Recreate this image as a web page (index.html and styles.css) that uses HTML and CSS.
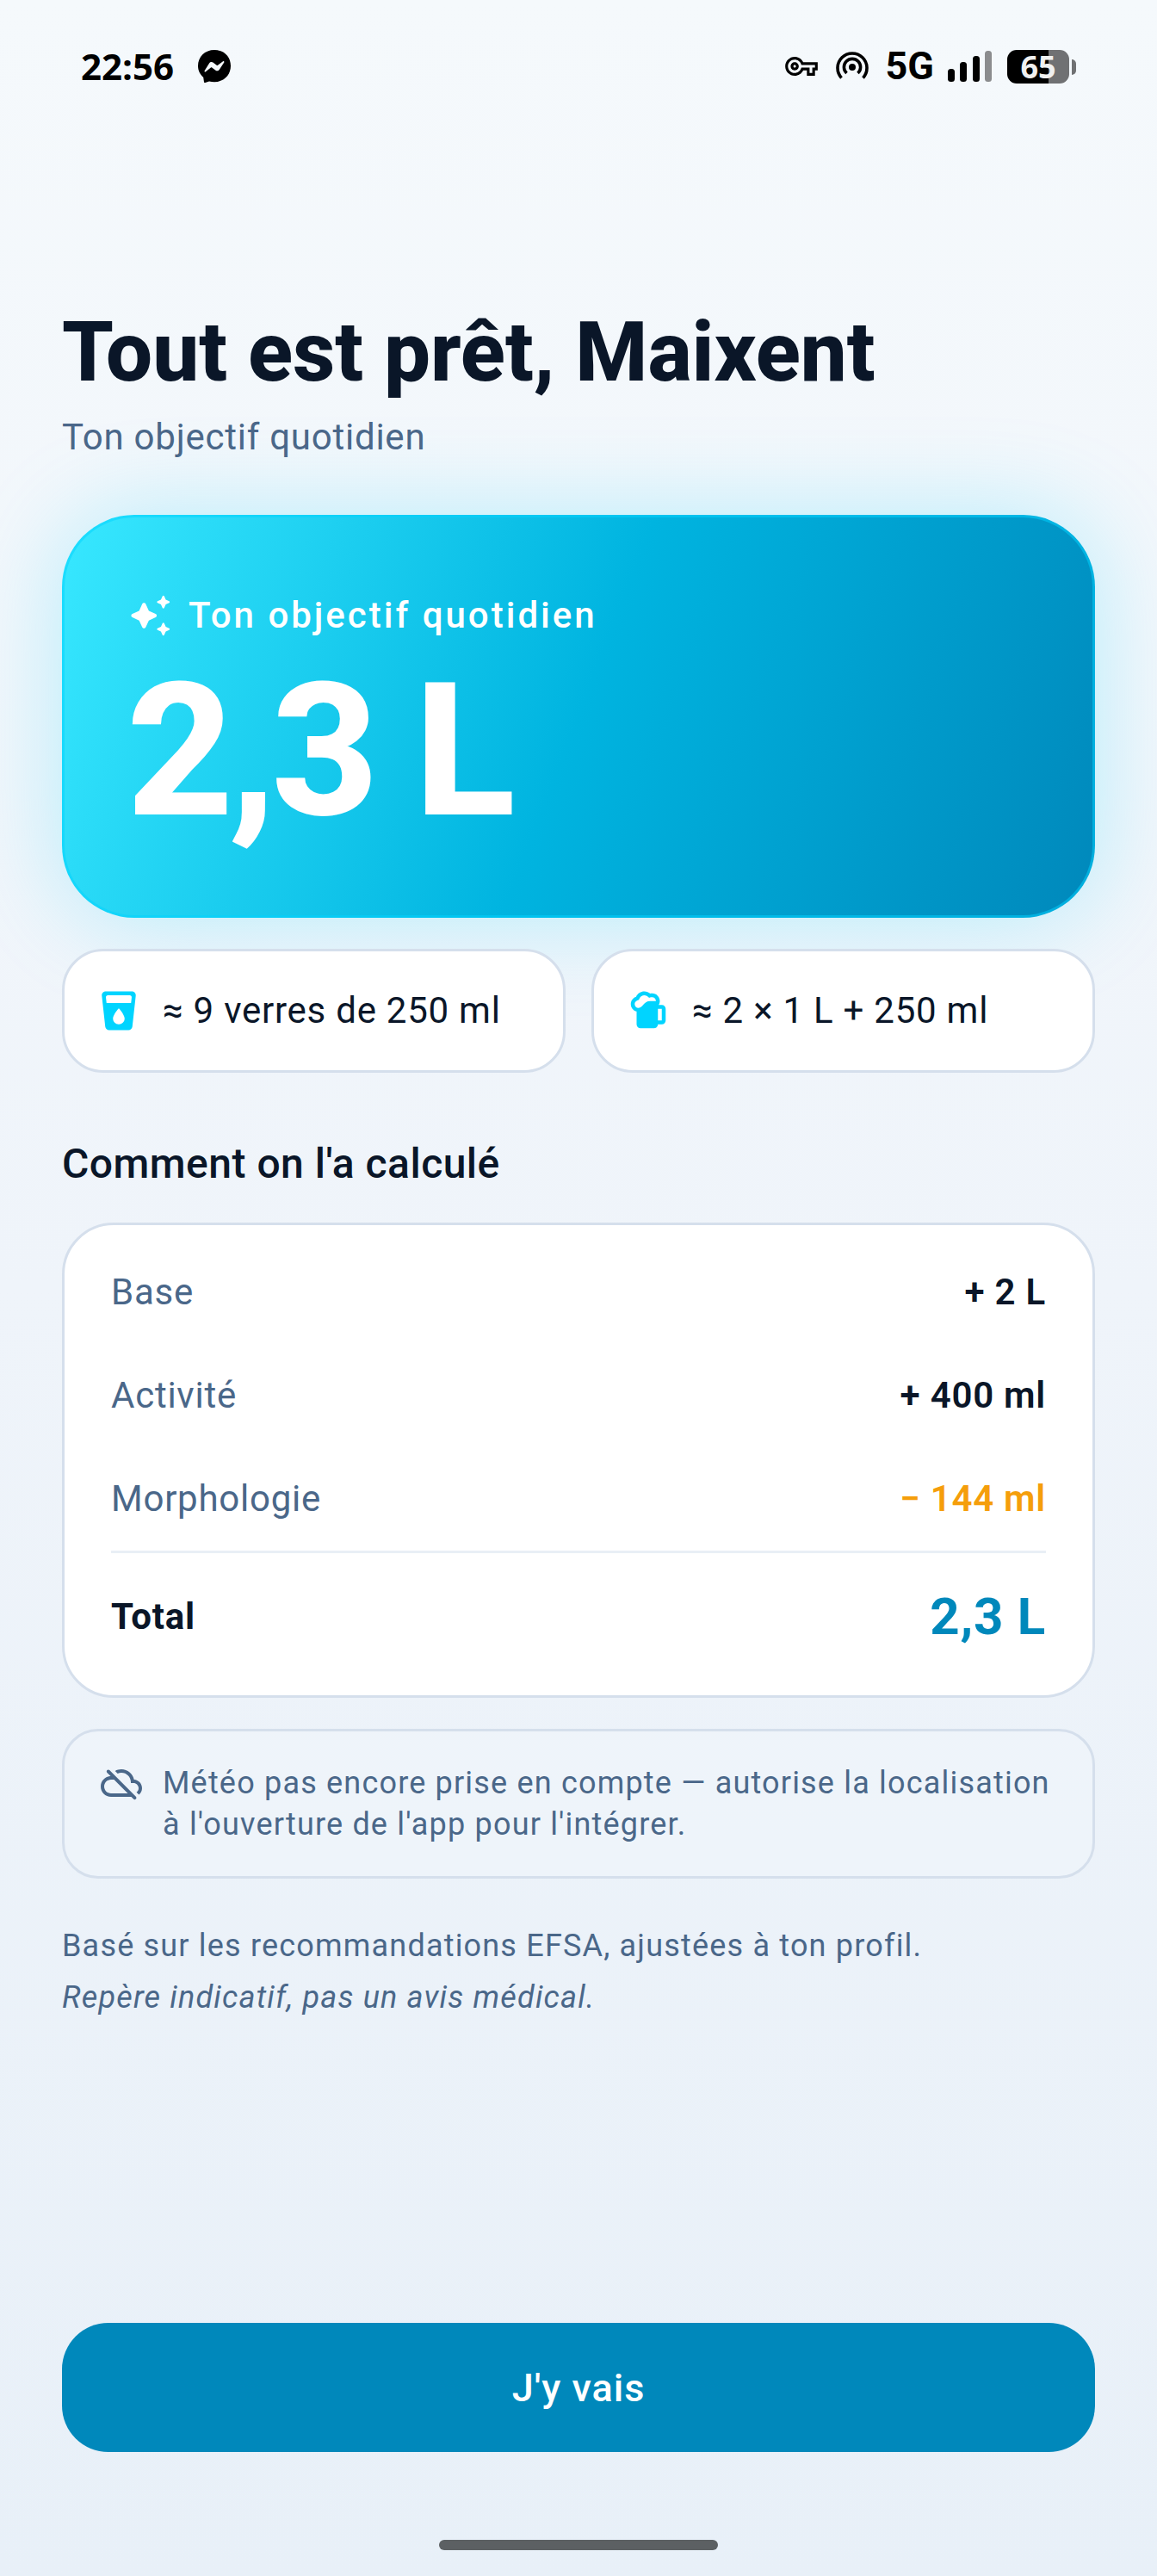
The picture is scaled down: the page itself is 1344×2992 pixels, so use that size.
FILE: index.html
```html
<!DOCTYPE html>
<html lang="fr">
<head>
    <meta charset="UTF-8">
    <meta name="viewport" content="width=device-width, initial-scale=1">
    <title>Ton objectif quotidien</title>
    <link rel="stylesheet" href="styles.css">
</head>
<body>

    <div class="screen">
        <header class="status">
            <div class="status__left">
                <span class="status__time">22:56</span>
                <svg class="status__messenger" viewBox="0 0 38 38" aria-hidden="true">
                    <path d="M19 0C8 0 0 8 0 18.500c0 5.500 2.400 10 6.200 13.300L7 37.300c.1.700.8 1 1.400.7l4.600-1.600c1.900.5 3.900.8 6 .8 11 0 19-8 19-18.700S30 0 19 0z"/>
                    <path fill="#f5f9fc" d="M7.600 24.200l5.600-8.900c.9-1.400 2.800-1.800 4.200-.8l4.300 3.200c.4.300.9.300 1.300 0l6-4.500c.8-.6 1.800.3 1.300 1.200l-5.600 8.500c-.9 1.400-2.800 1.800-4.200.8l-4.300-3.200c-.4-.3-.9-.3-1.300 0l-6 4.800c-.8.6-1.800-.2-1.300-1.100z"/>
                </svg>
            </div>
            <div class="status__right">
                <svg class="status__key" viewBox="0 5 24 14" aria-hidden="true">
                    <path d="M22 19h-6v-4h-2.680c-1.140 2.420-3.600 4-6.320 4-3.860 0-7-3.140-7-7s3.140-7 7-7c2.720 0 5.170 1.580 6.320 4H24v6h-2v4zm-4-2h2v-4h2v-2H11.940l-.23-.67C11.010 8.340 9.110 7 7 7c-2.760 0-5 2.240-5 5s2.240 5 5 5c2.110 0 4.010-1.340 4.710-3.330l.23-.67H18v4zM7 15c-1.650 0-3-1.350-3-3s1.350-3 3-3 3 1.350 3 3-1.350 3-3 3zm0-4c-.55 0-1 .45-1 1s.45 1 1 1 1-.45 1-1-.45-1-1-1z"/>
                </svg>
                <svg class="status__hotspot" viewBox="0 0 38 38" fill="none" stroke="#000" stroke-width="3.600" aria-hidden="true">
                    <circle cx="19" cy="20" r="4" fill="#000" stroke="none"/>
                    <path d="M12.500 27A9.600 9.600 0 1 1 25.500 27"/>
                    <path d="M6.500 32.500A17 17 0 1 1 31.500 32.500"/>
                </svg>
                <span class="status__network">5G</span>
                <svg class="status__signal" viewBox="0 0 52 36" aria-hidden="true">
                    <rect x="0" y="21" width="8" height="15" rx="3.500"/>
                    <rect x="14" y="13" width="8" height="23" rx="3.500"/>
                    <rect x="29" y="6" width="8" height="30" rx="3.500"/>
                    <rect x="43" y="0" width="8" height="36" rx="3.500" fill="#8b8c8e"/>
                </svg>
                <span class="battery"><span class="battery__level">65</span></span>
            </div>
        </header>

        <main class="content">
            <h1 class="title">Tout est prêt, Maixent</h1>
            <p class="subtitle">Ton objectif quotidien</p>

            <section class="hero">
                <p class="hero__label">
                    <svg class="icon" viewBox="0 0 24 24" aria-hidden="true">
                        <path d="M19.460 8l.79-1.750L22 5.460c.39-.18.39-.73 0-.91l-1.750-.79L19.460 2c-.18-.39-.73-.39-.91 0l-.79 1.750-1.760.79c-.39.18-.39.73 0 .91l1.750.79.79 1.760c.18.39.74.39.92 0zM11.500 9.500L9.910 6c-.35-.78-1.470-.78-1.820 0L6.500 9.500 3 11.090c-.78.36-.78 1.470 0 1.820l3.500 1.590L8.090 18c.36.78 1.470.78 1.820 0l1.590-3.500 3.500-1.590c.78-.36.78-1.470 0-1.820L11.500 9.500zm7.040 6.500l-.79 1.750-1.750.79c-.39.18-.39.73 0 .91l1.750.79.79 1.760c.18.39.73.39.91 0l.79-1.750 1.760-.79c.39-.18.39-.73 0-.91l-1.750-.79-.79-1.760c-.18-.39-.74-.39-.92 0z"/>
                    </svg>
                    Ton objectif quotidien
                </p>
                <p class="hero__value">2,3 L</p>
            </section>

            <ul class="chips">
                <li class="chip">
                    <svg class="icon" viewBox="0 0 24 24" aria-hidden="true">
                        <path d="M5.230 2C4.040 2 3.110 3.030 3.240 4.220l1.770 16C5.130 21.230 5.970 22 7 22h10c1.030 0 1.870-.77 1.990-1.780l1.770-16C20.880 3.030 19.960 2 18.770 2H5.230zM12 19c-1.660 0-3-1.340-3-3 0-1.550 1.810-3.950 2.620-4.940.2-.25.57-.25.77 0 .81 1 2.620 3.390 2.620 4.940-.01 1.660-1.350 3-3.010 3zm6.330-11H5.670l-.32-2.890c-.06-.59.4-1.110 1-1.110h11.300c.59 0 1.060.52.99 1.110L18.330 8z"/>
                    </svg>
                    ≈ 9 verres de 250 ml
                </li>
                <li class="chip">
                    <svg class="icon" viewBox="0 0 24 24" aria-hidden="true">
                        <path d="M19 9h-1.560c.35-.59.56-1.270.56-2 0-2.210-1.790-4-4-4-.34 0-.66.05-.98.13C12.200 2.450 11.160 2.020 10 2.020c-1.890 0-3.510 1.110-4.270 2.710C4.150 5.260 3 6.740 3 8.500c0 1.860 1.280 3.410 3 3.860V19c0 1.100.9 2 2 2h7c1.100 0 2-.9 2-2h2c1.100 0 2-.9 2-2v-6c0-1.100-.9-2-2-2zM7 10.500c-1.100 0-2-.9-2-2 0-.85.55-1.600 1.370-1.880l.8-.27.36-.76C8 4.620 8.940 4.020 10 4.020c.79 0 1.390.35 1.740.65l.78.65S13.160 5 13.990 5c1.100 0 2 .9 2 2h-3C9.670 7 9.150 10.500 7 10.500zm12 6.500h-2v-6h2v6z"/>
                    </svg>
                    ≈ 2 × 1 L + 250 ml
                </li>
            </ul>

            <h2 class="heading">Comment on l'a calculé</h2>
            <div class="card">
                <table class="breakdown">
                    <tbody>
                        <tr>
                            <th scope="row">Base</th>
                            <td>+ 2 L</td>
                        </tr>
                        <tr>
                            <th scope="row">Activité</th>
                            <td>+ 400 ml</td>
                        </tr>
                        <tr>
                            <th scope="row">Morphologie</th>
                            <td class="is-negative">− 144 ml</td>
                        </tr>
                    </tbody>
                    <tfoot>
                        <tr>
                            <th scope="row">Total</th>
                            <td>2,3 L</td>
                        </tr>
                    </tfoot>
                </table>
            </div>

            <div class="notice">
                <svg class="icon icon--small" viewBox="0 0 24 24" aria-hidden="true">
                    <path d="M24 15c0-2.640-2.050-4.780-4.650-4.960C18.670 6.590 15.640 4 12 4c-1.330 0-2.570.36-3.650.97l1.490 1.490C10.510 6.170 11.230 6 12 6c3.040 0 5.500 2.460 5.500 5.500v.5H19c1.660 0 3 1.340 3 3 0 .99-.48 1.850-1.210 2.400l1.410 1.410c1.090-.92 1.800-2.270 1.800-3.810zM3.710 4.560c-.39.39-.39 1.020 0 1.410l2.060 2.060h-.42C2.340 8.360 0 10.910 0 14c0 3.310 2.690 6 6 6h11.730l1.290 1.290c.39.39 1.020.39 1.410 0 .39-.39.39-1.020 0-1.410L5.120 4.560c-.39-.39-1.020-.39-1.410 0zM7.730 10l8 8H6c-2.210 0-4-1.790-4-4s1.790-4 4-4h1.730z"/>
                </svg>
                <p>Météo pas encore prise en compte — autorise la localisation à l'ouverture de l'app pour l'intégrer.</p>
            </div>

            <p class="source">Basé sur les recommandations EFSA, ajustées à ton profil.</p>
            <p class="source source--legal">Repère indicatif, pas un avis médical.</p>
        </main>

        <footer class="actions">
            <button class="button" type="button">J'y vais</button>
            <div class="home-bar"></div>
        </footer>
    </div>

</body>
</html>
```

FILE: styles.css
```css
html {
  box-sizing: border-box;
}

*,
*::before,
*::after {
  box-sizing: inherit;
}

h1,
h2,
p,
ul {
  margin: 0;
  padding: 0;
}

ul {
  list-style: none;
}

:root {
  --ink: #0a1628;
  --muted: #4a6789;
  --line: #d5dfec;
  --blue: #0088bb;
  --cyan: #00d4ff;
  --amber: #f59e0b;
  font-family: Roboto, Arial, sans-serif;
}

body {
  margin: 0;
  background-color: #e8f0f8;
  color: var(--ink);
  font-size: 42px;
  line-height: 60px;
}

.screen {
  background-image: linear-gradient(to bottom, #f5f9fc, #eff4fa 50%, #e8f0f8);
  display: flex;
  flex-direction: column;
  min-height: 100vh;
}

/* Status bar */

.status {
  align-items: center;
  color: #000;
  display: flex;
  height: 154px;
  justify-content: space-between;
  padding: 0 102px 0 94px;
}

.status__left,
.status__right {
  align-items: center;
  display: flex;
}

.status__left {
  gap: 28px;
}

.status__time {
  font-family: "Open Sans", sans-serif;
  font-weight: 700;
}

.status__messenger,
.status__hotspot {
  height: 38px;
  width: 38px;
}

.status__key {
  height: 22px;
  margin-right: 21px;
  width: 38px;
}

.status__network {
  font-size: 45px;
  font-weight: 700;
  margin: 0 16px 0 20px;
}

.status__signal {
  height: 36px;
  margin-right: 17px;
  width: 52px;
}

.battery {
  background-image: linear-gradient(to right, #000 66%, #707173 66%);
  border-radius: 11px;
  height: 39px;
  position: relative;
  width: 72px;
}

.battery::after {
  background-color: #707173;
  border-radius: 0 5px 5px 0;
  content: "";
  height: 18px;
  left: 75px;
  position: absolute;
  top: 11px;
  width: 5px;
}

.battery__level {
  color: #f0f0f0;
  display: block;
  font-family: "Open Sans", sans-serif;
  font-size: 36px;
  font-weight: 700;
  line-height: 39px;
  text-align: center;
}

/* Content */

.content {
  flex: 1;
  letter-spacing: 0.018em;
  padding: 195px 72px 48px;
}

.title {
  font-size: 96px;
  font-weight: 800;
  letter-spacing: 0;
  line-height: 120px;
}

.subtitle {
  color: var(--muted);
  margin: 9px 0 60px;
}

.icon {
  fill: currentColor;
  flex: none;
  height: 54px;
  width: 54px;
}

.icon--small {
  height: 48px;
  width: 48px;
}

.hero {
  background-image: linear-gradient(111deg, #38e8ff, #00b4e0 50%, #0088bb);
  background-origin: border-box;
  border: 3px solid rgba(0, 212, 255, 0.5);
  border-radius: 84px;
  box-shadow: 0 0 110px rgba(0, 212, 255, 0.25);
  color: #fff;
  padding: 84px 72px 82px;
}

.hero__label {
  align-items: center;
  display: flex;
  font-weight: 500;
  gap: 18px;
  letter-spacing: 3px;
}

.hero__value {
  font-size: 216px;
  font-weight: 800;
  letter-spacing: -6px;
  line-height: 216px;
  margin-top: 20px;
}

.chips {
  display: grid;
  gap: 30px;
  grid-template-columns: repeat(2, 1fr);
  margin-top: 36px;
}

.chip {
  align-items: center;
  background-color: #fff;
  border: 3px solid var(--line);
  border-radius: 48px;
  display: flex;
  gap: 24px;
  padding: 39px 36px;
}

.chip .icon {
  color: var(--cyan);
}

.heading {
  font-size: 48px;
  font-weight: 500;
  letter-spacing: 0.01em;
  line-height: 72px;
  margin: 70px 0 32px;
}

.card {
  background-color: #fff;
  border: 3px solid var(--line);
  border-radius: 60px;
  padding: 18px 54px;
}

.breakdown {
  border-spacing: 0;
  width: 100%;
}

.breakdown th,
.breakdown td {
  height: 120px;
  padding: 0;
  vertical-align: middle;
}

.breakdown th {
  color: var(--muted);
  font-weight: 400;
  text-align: left;
}

.breakdown td {
  font-weight: 600;
  text-align: right;
}

.breakdown .is-negative {
  color: var(--amber);
}

.breakdown tfoot th,
.breakdown tfoot td {
  border-top: 3px solid #e9eff6;
  font-weight: 700;
  height: 150px;
}

.breakdown tfoot th {
  color: var(--ink);
}

.breakdown tfoot td {
  color: var(--blue);
  font-size: 60px;
}

.notice {
  background-color: rgba(255, 255, 255, 0.15);
  border: 3px solid var(--line);
  border-radius: 42px;
  color: var(--muted);
  display: flex;
  font-size: 36px;
  gap: 24px;
  letter-spacing: 0.033em;
  line-height: 48px;
  margin: 36px 0 54px;
  padding: 36px 42px;
}

.source {
  color: var(--muted);
  font-size: 36px;
  letter-spacing: 0.033em;
  line-height: 48px;
}

.source--legal {
  font-style: italic;
  margin-top: 12px;
}

/* Bottom action */

.actions {
  align-items: center;
  display: flex;
  flex-direction: column;
  gap: 102px;
  padding: 0 72px 30px;
}

.button {
  background-color: var(--blue);
  border: 0;
  border-radius: 54px;
  color: #fff;
  font-family: inherit;
  font-size: 45px;
  font-weight: 500;
  height: 150px;
  letter-spacing: 1px;
  width: 100%;
}

.home-bar {
  background-color: #5c6063;
  border-radius: 6px;
  height: 12px;
  width: 324px;
}
```
